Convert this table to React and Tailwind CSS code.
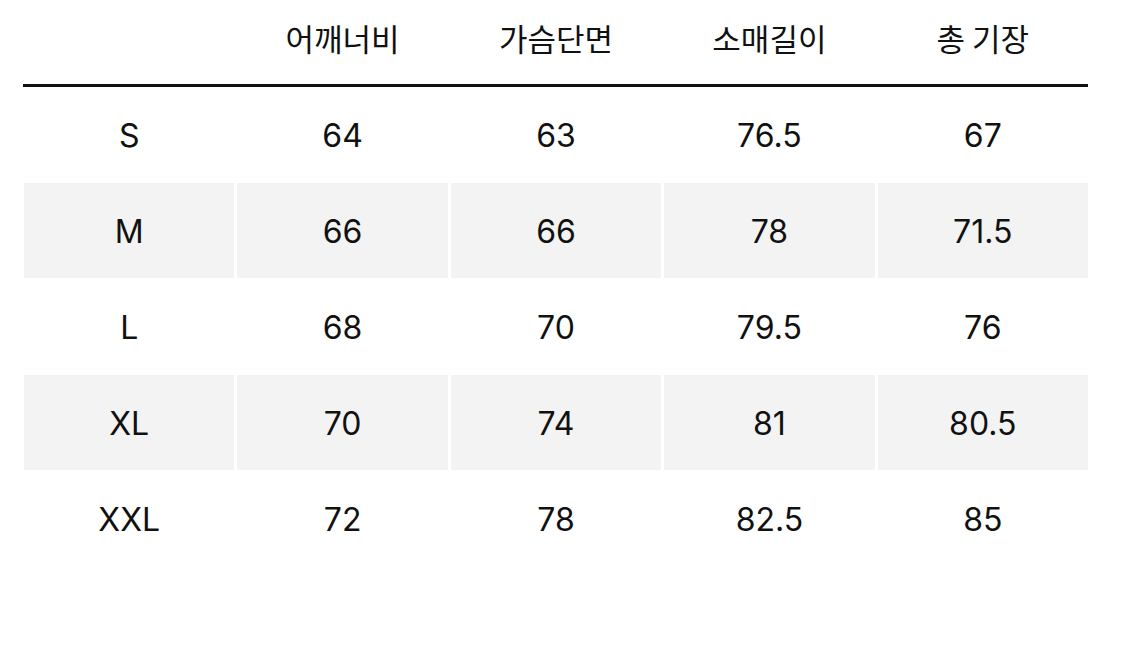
const headers = ["", "어깨너비", "가슴단면", "소매길이", "총 기장"];
const rows = [
  ["S", "64", "63", "76.5", "67"],
  ["M", "66", "66", "78", "71.5"],
  ["L", "68", "70", "79.5", "76"],
  ["XL", "70", "74", "81", "80.5"],
  ["XXL", "72", "78", "82.5", "85"],
];

export default function App() {
  return (
    <div
      className="w-[1125px] h-[648px] bg-white text-[#111]"
      style={{ fontFamily: 'Inter, "Noto Sans CJK KR", sans-serif' }}
    >
      <div className="ml-[24px] w-[1064px]">
        <div className="grid grid-cols-5 gap-x-[3px] h-[84px] pb-[10px] items-center">
          {headers.map((h, i) => (
            <div
              key={i}
              className="text-center text-[31px] leading-none"
              style={{ fontFamily: '"Noto Sans CJK KR", sans-serif' }}
            >
              {h}
            </div>
          ))}
        </div>
        <div className="h-[3px] bg-[#111] -ml-[1px]" />
        {rows.map((r, ri) => (
          <div key={ri} className="grid grid-cols-5 gap-x-[3px] h-[96px] pb-[1px]">
            {r.map((c, ci) => (
              <div
                key={ci}
                className={`flex items-center justify-center text-[32px] leading-none pt-[3px] ${
                  ri % 2 === 1 ? "bg-[#f3f3f3]" : ""
                }`}
              >
                {c}
              </div>
            ))}
          </div>
        ))}
      </div>
    </div>
  );
}
